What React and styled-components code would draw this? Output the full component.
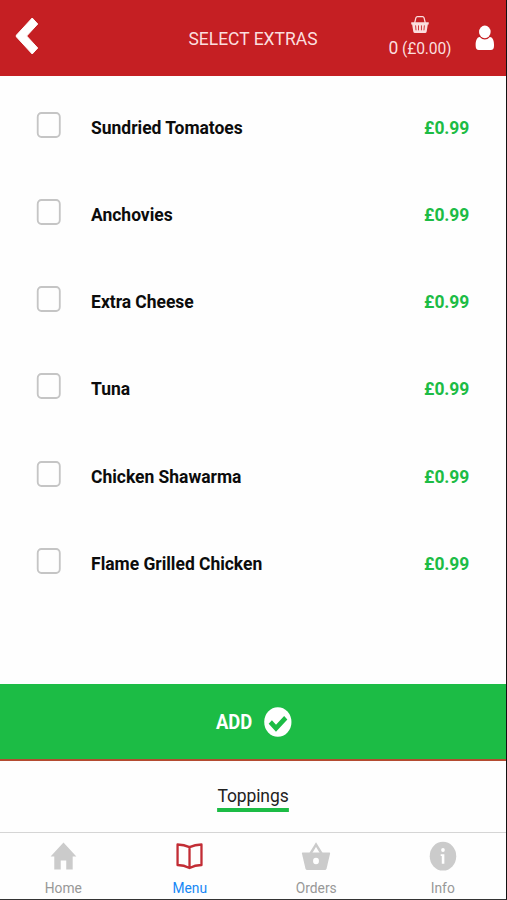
import React from "react";
import styled, { createGlobalStyle } from "styled-components";

const RED = "#c51f23";
const GREEN = "#1cbc45";

const GlobalStyle = createGlobalStyle`
  * { box-sizing: border-box; }
  html, body { margin: 0; padding: 0; background: #fff; overflow: hidden; }
`;

const Device = styled.div`
  width: 507px;
  height: 900px;
  overflow: hidden;
  border-right: 1px solid #111;
  border-bottom: 1px solid #333;
  background: #fefefe;
`;

const Screen = styled.div`
  display: flex;
  flex-direction: column;
  width: 550px;
  height: 899px;
  transform: scaleX(0.92);
  transform-origin: 0 0;
  font-family: Roboto, "Liberation Sans", sans-serif;
  color: #0c0c0c;
`;

const Header = styled.header`
  display: grid;
  grid-template-columns: 150px 250px 113px 1fr;
  flex: none;
  height: 75.5px;
  background: ${RED};
  color: #fff;
`;

const BackButton = styled.button`
  display: block;
  align-self: start;
  width: 60px;
  padding: 17px 0 0 17px;
  border: 0;
  background: none;
  text-align: left;
  line-height: 0;
`;

const Title = styled.h1`
  margin: 0;
  padding-top: 1px;
  font-size: 19px;
  font-weight: 400;
  line-height: 76px;
  text-align: center;
  color: #fbdede;
`;

const Basket = styled.div`
  display: flex;
  flex-direction: column;
  align-items: center;
  padding-top: 16px;
  color: #fbdede;
`;

const BasketTotal = styled.span`
  margin-top: 4px;
  font-size: 17px;
  line-height: 22px;
  letter-spacing: -0.15px;
  white-space: nowrap;
`;

const BasketCount = styled.span`
  font-size: 19px;
`;

const Account = styled.div`
  padding: 25px 0 0 4px;
  line-height: 0;
`;

const ExtrasList = styled.ul`
  flex: none;
  height: 608px;
  margin: 0;
  padding: 8px 40px 0 40px;
  list-style: none;
`;

const ExtraRow = styled.li`
  display: grid;
  grid-template-columns: 59px 1fr auto;
  align-items: center;
  height: 87.25px;
  font-size: 19px;
  font-weight: 700;
`;

const Checkbox = styled.span`
  width: 26px;
  height: 26px;
  margin-top: -5px;
  border: 2px solid #c5c5c5;
  border-radius: 5px;
`;

const ExtraName = styled.span`
  letter-spacing: -0.03px;
  white-space: nowrap;
`;

const Price = styled.span`
  color: ${GREEN};
  letter-spacing: -0.1px;
`;

const AddButton = styled.button`
  display: flex;
  flex: none;
  align-items: center;
  justify-content: center;
  gap: 13px;
  width: 100%;
  height: 77px;
  padding: 1px 0 0 2px;
  border: 0;
  border-bottom: 2px solid #b44b31;
  background: ${GREEN};
  color: #fff;
  font: 700 20px Roboto, sans-serif;
`;

const Tabs = styled.div`
  display: flex;
  flex: none;
  justify-content: center;
  height: 71.5px;
  padding-top: 23px;
`;

const Tab = styled.span`
  height: 28.5px;
  border-bottom: 4px solid ${GREEN};
  font-size: 19px;
  line-height: 23px;
  letter-spacing: -0.1px;
  color: #222;
`;

const Nav = styled.nav`
  display: grid;
  grid-template-columns: repeat(4, 1fr);
  flex: 1;
  border-top: 1.5px solid #d5d5d5;
`;

const NavItem = styled.div`
  display: flex;
  flex-direction: column;
  align-items: center;
  padding-top: 9px;
  font-size: 15px;
  line-height: 18px;
  color: ${(p) => (p.$active ? "#1687f5" : "#989898")};

  svg { margin-bottom: 8px; }
`;

const Glyph = styled.svg`
  display: block;
  flex: none;
  overflow: visible;
`;

const BackIcon = () => (
  <Glyph width="25" height="38" viewBox="0 0 25 38">
    <path d="M18 1 24 7 12 19 24 31 18 37 1 20Q0 19 1 18Z" fill="#fff" stroke="#fff" strokeWidth="1" strokeLinejoin="round" />
  </Glyph>
);

const SmallBasketIcon = () => (
  <Glyph width="19" height="17" viewBox="0 0 19 17">
    <path d="M3.7 7 5 2Q5.4.7 6.7.7H12.3Q13.6.7 14 2L15.3 7" fill="none" stroke="currentColor" strokeWidth="1.3" />
    <path d="M0 6.3H19V8.4H18L16.8 15.5Q16.5 17 15 17H4Q2.5 17 2.2 15.5L1 8.4H0Z" fill="currentColor" />
    <path d="M4.7 9.4 5.2 14.3M7.9 9.4V14.3M11.1 9.4V14.3M14.3 9.4 13.8 14.3" stroke={RED} strokeWidth="0.9" />
  </Glyph>
);

const UserIcon = () => (
  <Glyph width="20" height="25" viewBox="0 0 20 25">
    <path d="M4.5 12Q7 14.5 10 14.5T15.5 12C19 12.3 20 16 20 20.5Q20 25 16.5 25H3.5Q0 25 0 20.5C0 16 1 12.3 4.5 12Z" fill="#fff" />
    <circle cx="10" cy="6.9" r="6.3" fill="#fff" />
  </Glyph>
);

const CheckIcon = () => (
  <Glyph width="30" height="30" viewBox="0 0 30 30">
    <circle cx="15" cy="15" r="14.8" fill="#fff" />
    <path d="M6.8 15 13 21.2 23.6 10.7" fill="none" stroke={GREEN} strokeWidth="5" />
  </Glyph>
);

const HomeIcon = () => (
  <Glyph width="28" height="29" viewBox="0 0 28 29">
    <path d="M14 0.5 28 14.5H24V27.5H17V18.5H11V27.5H4V14.5H0Z" fill="#cbcbcb" />
  </Glyph>
);

const MenuIcon = () => (
  <Glyph width="30" height="29" viewBox="0 0 30 29">
    <path d="M15 5.2Q9 2.4 2 2.4V23Q9 23 15 26Q21 23 28 23V2.4Q21 2.4 15 5.2ZM15 5.2V26" fill="none" stroke="#c22d35" strokeWidth="2.5" strokeLinejoin="round" />
  </Glyph>
);

const OrdersIcon = () => (
  <Glyph width="31" height="29" viewBox="0 0 31 29">
    <path d="M9.2 12 15.5 2.5 21.8 12" fill="none" stroke="#cbcbcb" strokeWidth="2.6" />
    <path d="M1 10.5H30Q31 10.5 30.8 11.5L27 26.5Q26.6 28 25 28H6Q4.4 28 4 26.5L.2 11.5Q0 10.5 1 10.5Z" fill="#cbcbcb" />
    <circle cx="15.5" cy="19" r="3.2" fill="#fff" />
  </Glyph>
);

const InfoIcon = () => (
  <Glyph width="29" height="29" viewBox="0 0 29 29">
    <circle cx="14.5" cy="14.2" r="14.4" fill="#cbcbcb" />
    <circle cx="14.5" cy="8" r="2" fill="#fff" />
    <path d="M12 12.3H16V21.8H13.2V14H12Z" fill="#fff" />
  </Glyph>
);

const extras = [
  "Sundried Tomatoes",
  "Anchovies",
  "Extra Cheese",
  "Tuna",
  "Chicken Shawarma",
  "Flame Grilled Chicken",
];

const navItems = [
  { label: "Home", Icon: HomeIcon },
  { label: "Menu", Icon: MenuIcon, active: true },
  { label: "Orders", Icon: OrdersIcon },
  { label: "Info", Icon: InfoIcon },
];

export default function App() {
  return (
    <Device>
      <GlobalStyle />
      <Screen>
        <Header>
          <BackButton aria-label="Back"><BackIcon /></BackButton>
          <Title>SELECT EXTRAS</Title>
          <Basket>
            <SmallBasketIcon />
            <BasketTotal><BasketCount>0</BasketCount> (£0.00)</BasketTotal>
          </Basket>
          <Account><UserIcon /></Account>
        </Header>
        <ExtrasList>
          {extras.map((name) => (
            <ExtraRow key={name}>
              <Checkbox role="checkbox" aria-checked="false" />
              <ExtraName>{name}</ExtraName>
              <Price>£0.99</Price>
            </ExtraRow>
          ))}
        </ExtrasList>
        <AddButton>ADD<CheckIcon /></AddButton>
        <Tabs><Tab>Toppings</Tab></Tabs>
        <Nav>
          {navItems.map(({ label, Icon, active }) => (
            <NavItem key={label} $active={active}>
              <Icon />
              {label}
            </NavItem>
          ))}
        </Nav>
      </Screen>
    </Device>
  );
}
